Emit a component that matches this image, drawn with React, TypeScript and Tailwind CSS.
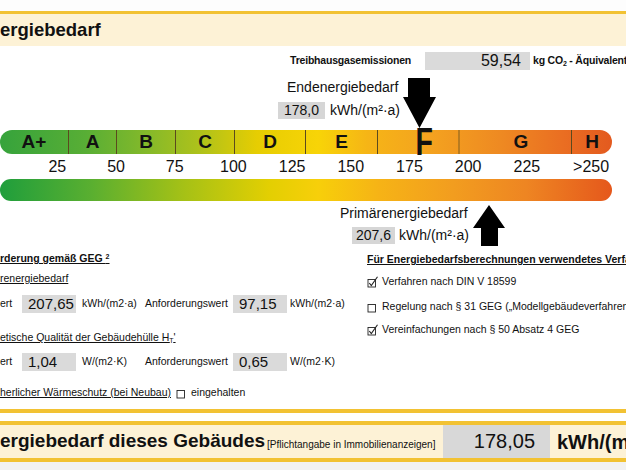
import React from "react";

const segments = [
  { label: "A+", w: "w-[69px]" },
  { label: "A", w: "w-[48px]" },
  { label: "B", w: "w-[59px]" },
  { label: "C", w: "w-[59px]" },
  { label: "D", w: "w-[71px]" },
  { label: "E", w: "w-[72px]" },
  { label: "F", w: "w-[93px]" },
  { label: "G", w: "w-[101px]" },
  { label: "H", w: "w-[40px]" },
];

const ticks = ["25", "50", "75", "100", "125", "150", "175", "200", "225", ">250"];

function CheckBox({ checked }: { checked?: boolean }) {
  return (
    <svg width="12" height="12" viewBox="0 0 12 12" className="shrink-0">
      <rect x="1" y="3.5" width="7.5" height="7.5" fill="none" stroke="#222" strokeWidth="0.9" />
      {checked && (
        <path d="M2.3 7 L4.3 9.6 L10.5 0.8" fill="none" stroke="#222" strokeWidth="1.1" />
      )}
    </svg>
  );
}

function ValueBox({ value }: { value: string }) {
  return (
    <div className="w-[54px] h-[18px] shrink-0 bg-[#dadada] pl-[6px] text-[15px] leading-[18px]">{value}</div>
  );
}

export default function App() {
  return (
    <div className="w-[626px] h-[470px] overflow-hidden bg-white text-[#111] font-['Liberation_Sans',Arial,sans-serif]">
      {/* header band */}
      <div className="h-[11px] bg-[#fdfdfd]" />
      <div className="h-[3px] bg-[#f2c233]" />
      <div className="h-[32px] bg-[#fdf2d6] flex items-center text-[18.5px] font-bold whitespace-nowrap">
        ergiebedarf
      </div>

      {/* Treibhausgas row */}
      <div className="mt-[6px] h-[18px] flex items-center pl-[290px] whitespace-nowrap">
        <span className="w-[135px] shrink-0 text-[10.5px] font-bold tracking-[-0.2px]">Treibhausgasemissionen</span>
        <div className="w-[105px] shrink-0 h-[18px] bg-[#dadada] text-right pr-[9px] text-[16px] leading-[18px]">59,54</div>
        <span className="ml-[3px] text-[10.5px] font-bold tracking-[-0.2px]">
          kg CO<sub className="text-[7px]">2</sub> - Äquivalent
        </span>
      </div>

      {/* Endenergie marker */}
      <div className="h-[60px] flex items-start pl-[278px]">
        <div className="w-[125px] pt-[8px]">
          <div className="pl-[9px] text-[14px] leading-[18px] whitespace-nowrap">Endenergiebedarf</div>
          <div className="mt-[4px] flex items-center whitespace-nowrap">
            <div className="w-[47px] h-[17px] bg-[#d6d6d6] text-center text-[14px] leading-[17px]">178,0</div>
            <span className="ml-[5px] text-[14px]">kWh/(m²·a)</span>
          </div>
        </div>
        <svg width="33" height="50" viewBox="0 0 33 50" className="mt-[8px]">
          <path d="M5 0 H27 V19 H33 L16.5 50 L0 19 H5 Z" fill="#000" />
        </svg>
      </div>

      {/* class bar */}
      <div className="w-[612px] h-[24px] flex rounded-l-[12px] rounded-r-[12px] bg-[linear-gradient(to_right,#36a33c_0%,#58ae35_14%,#84b92a_24%,#b0c21a_33%,#e6cd02_42%,#f8d407_52%,#f6b516_60%,#f4a31f_70%,#ee8922_82%,#ea6e22_92%,#e35a1f_100%)]">
        {segments.map((s, i) => (
          <div
            key={s.label}
            className={`${s.w} h-[24px] flex items-center justify-center font-bold ${
              i < segments.length - 1 ? "border-r border-[#5b4a1e]" : ""
            } ${s.label === "F" ? "text-[38px] leading-[24px] scale-x-75" : "text-[19px] leading-[24px]"}`}
          >
            {s.label}
          </div>
        ))}
      </div>

      {/* numbers */}
      <div className="h-[25px] flex items-center pl-[28px] text-[16px] whitespace-nowrap">
        {ticks.map((t) => (
          <div key={t} className={t === ">250" ? "w-[70px] text-center" : "w-[58.8px] text-center"}>
            {t}
          </div>
        ))}
      </div>

      {/* continuous bar */}
      <div className="w-[612px] h-[22px] rounded-[11px] bg-[linear-gradient(to_right,#1f9e3c_0%,#5aaf30_15%,#a5c116_30%,#e3cf02_44%,#f7cf0a_52%,#f6b316_62%,#f29d1f_74%,#ee8522_86%,#e5581c_100%)]" />

      {/* Primärenergie marker */}
      <div className="h-[47px] flex items-start pl-[340px]">
        <div className="w-[133px] pt-[3px]">
          <div className="text-[14px] leading-[18px] whitespace-nowrap">Primärenergiebedarf</div>
          <div className="mt-[3px] pl-[12px] flex items-center whitespace-nowrap">
            <div className="w-[43px] h-[17px] bg-[#d6d6d6] text-center text-[14px] leading-[17px]">207,6</div>
            <span className="ml-[4px] text-[14px]">kWh/(m²·a)</span>
          </div>
        </div>
        <svg width="32" height="41" viewBox="0 0 32 41" className="mt-[4px]">
          <path d="M16 0 L32 23 H25 V41 H8 V23 H0 Z" fill="#000" />
        </svg>
      </div>

      {/* requirements */}
      <div className="h-[161px] flex whitespace-nowrap text-[10.5px]">
        <div className="w-[367px] shrink-0 pt-[2px]">
          <div className="h-[16px] leading-[16px] font-bold underline">
            rderung gemäß GEG <sup className="text-[7px]">2</sup>
          </div>
          <div className="mt-[4px] h-[16px] leading-[16px] underline">renergiebedarf</div>
          <div className="mt-[9px] flex items-center h-[18px]">
            <span className="w-[22px] shrink-0">ert</span>
            <ValueBox value="207,65" />
            <span className="ml-[6px] w-[63px] shrink-0">kWh/(m2·a)</span>
            <span className="w-[88px] shrink-0">Anforderungswert</span>
            <ValueBox value="97,15" />
            <span className="ml-[3px]">kWh/(m2·a)</span>
          </div>
          <div className="mt-[16px] h-[16px] leading-[16px] underline">
            etische Qualität der Gebäudehülle H<sub className="text-[7px]">T</sub>'
          </div>
          <div className="mt-[8px] flex items-center h-[18px]">
            <span className="w-[22px] shrink-0">ert</span>
            <ValueBox value="1,04" />
            <span className="ml-[6px] w-[63px] shrink-0">W/(m2·K)</span>
            <span className="w-[88px] shrink-0">Anforderungswert</span>
            <ValueBox value="0,65" />
            <span className="ml-[3px]">W/(m2·K)</span>
          </div>
          <div className="mt-[14px] h-[16px] flex items-center gap-[5px]">
            <span className="underline">herlicher Wärmeschutz (bei Neubau)</span>
            <span className="flex items-center gap-[3px]">
              <CheckBox /> eingehalten
            </span>
          </div>
        </div>
        <div className="flex-1 min-w-0 pt-[3px]">
          <div className="h-[16px] leading-[16px] font-bold underline">
            Für Energiebedarfsberechnungen verwendetes Verfahren
          </div>
          <div className="mt-[7px] h-[16px] flex items-center gap-[3px]">
            <CheckBox checked /> Verfahren nach DIN V 18599
          </div>
          <div className="mt-[9px] h-[16px] flex items-center gap-[3px]">
            <CheckBox /> Regelung nach § 31 GEG („Modellgebäudeverfahren")
          </div>
          <div className="mt-[7px] h-[16px] flex items-center gap-[3px]">
            <CheckBox checked /> Vereinfachungen nach § 50 Absatz 4 GEG
          </div>
        </div>
      </div>

      {/* footer band */}
      <div className="h-[4px] bg-[#f2c233]" />
      <div className="h-[8px] bg-white" />
      <div className="h-[4px] bg-[#f2c233]" />
      <div className="h-[33px] bg-[#fdf2d6] flex items-center whitespace-nowrap">
        <span className="w-[264px] shrink-0 text-[19px] font-bold">ergiebedarf dieses Gebäudes</span>
        <span className="w-[179px] shrink-0 mt-[5px] pl-[3px] text-[10px]">[Pflichtangabe in Immobilienanzeigen]</span>
        <div className="w-[107px] shrink-0 h-[33px] bg-[#d8d8d8] text-right pr-[15px] text-[20px] leading-[33px]">178,05</div>
        <span className="ml-[7px] text-[20px] font-bold">kWh/(m²·a)</span>
      </div>
      <div className="h-[4px] bg-[#f2c233]" />
      <div className="h-[8px] bg-[#f2f2f2]" />
    </div>
  );
}
